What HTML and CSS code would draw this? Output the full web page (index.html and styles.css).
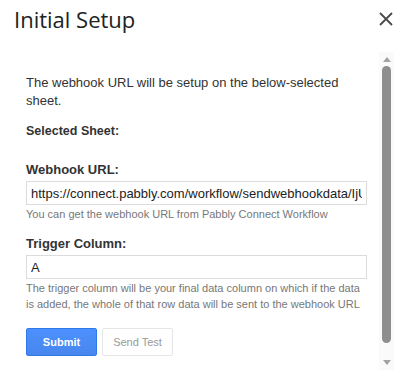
FILE: index.html
```html
<!DOCTYPE html>
<html lang="en">
<head>
    <meta charset="UTF-8">
    <meta name="viewport" content="width=device-width, initial-scale=1.0">
    <title>Initial Setup</title>
    <link rel="stylesheet" href="styles.css">
</head>
<body>

    <div class="dialog">

        <header class="dialog-head">
            <h1 class="dialog-title">Initial Setup</h1>
            <button class="close-btn" type="button" aria-label="Close">
                <svg width="14" height="14" viewBox="0 0 14 14">
                    <path d="M1 1 L13 13 M13 1 L1 13" stroke="#4a4a4a" stroke-width="1.8" fill="none"/>
                </svg>
            </button>
        </header>

        <div class="dialog-body">

            <form class="setup-form">

                <p class="intro">The webhook URL will be setup on the below-selected sheet.</p>

                <div class="field field-sheet">
                    <label>Selected Sheet:</label>
                </div>

                <div class="field field-url">
                    <label for="webhook-url">Webhook URL:</label>
                    <input type="text" id="webhook-url" value="https://connect.pabbly.com/workflow/sendwebhookdata/IjU3NjUwNTZmMDYzMDA0MzM1MjZjIg_3D_3D_pc">
                    <span class="hint">You can get the webhook URL from Pabbly Connect Workflow</span>
                </div>

                <div class="field field-trigger">
                    <label for="trigger-column">Trigger Column:</label>
                    <input type="text" id="trigger-column" value="A">
                    <span class="hint">The trigger column will be your final data column on which if the data is added, the whole of that row data will be sent to the webhook URL</span>
                </div>

                <div class="actions">
                    <button type="submit" class="btn btn-action">Submit</button>
                    <button type="button" class="btn">Send Test</button>
                </div>

            </form>

            <div class="scrollbar">
                <span class="arrow arrow-up"></span>
                <span class="thumb"></span>
                <span class="arrow arrow-down"></span>
            </div>

        </div>

    </div>

</body>
</html>
```

FILE: styles.css
```css
* {
    box-sizing: border-box;
}

body {
    margin: 0;
    background: #fff;
    font-family: "Liberation Sans", Arial, sans-serif;
    color: #333;
}

.dialog {
    width: 397px;
    height: 382px;
    display: flex;
    flex-direction: column;
}

.dialog-head {
    display: flex;
    align-items: flex-start;
    justify-content: space-between;
    padding: 5px 4px 0 14px;
    height: 52px;
}

.dialog-title {
    margin: 0;
    font-family: "Open Sans", sans-serif;
    font-weight: 400;
    font-size: 22px;
    line-height: 28px;
    color: #202124;
}

.close-btn {
    border: 0;
    background: none;
    padding: 0;
    margin: 7px 0 0 0;
    width: 14px;
    height: 14px;
    display: flex;
}

.dialog-body {
    flex: 1;
    display: flex;
    padding-right: 3px;
    padding-bottom: 12px;
}

.setup-form {
    flex: 1;
    padding: 22px 12px 0 26px;
}

.intro {
    margin: 0 0 13px;
    font-size: 13px;
    line-height: 18px;
}

.field {
    display: flex;
    flex-direction: column;
}

.field > label {
    font-size: 13px;
    font-weight: bold;
    line-height: 17px;
    margin-bottom: 3px;
}

.field-sheet {
    margin-bottom: 18px;
}

.field-sheet > label {
    font-size: 12.5px;
}

.field-url {
    margin-bottom: 13px;
}

.field-trigger {
    margin-bottom: 16px;
}

.field > input {
    height: 24px;
    border: 1px solid #dcdcdc;
    padding: 0 4px;
    font-family: "Liberation Sans", Arial, sans-serif;
    font-size: 13px;
    color: #222;
    outline: 0;
}

.hint {
    font-size: 11px;
    line-height: 16px;
    color: #777;
    margin-top: 1px;
}

.actions {
    display: flex;
    gap: 5px;
}

.btn {
    height: 28px;
    min-width: 71px;
    padding: 0 8px;
    border: 1px solid #e5e5e5;
    border-radius: 2px;
    background: #fff;
    color: #999;
    font-family: "Liberation Sans", Arial, sans-serif;
    font-size: 11px;
}

.btn-action {
    background: linear-gradient(#4d90fe, #4787ed);
    border-color: #3079ed;
    color: #fff;
    font-weight: bold;
}

.scrollbar {
    width: 15px;
    display: flex;
    flex-direction: column;
    align-items: center;
    background: #fafafa;
    padding: 5px 0;
}

.arrow {
    width: 0;
    height: 0;
    border-left: 4px solid transparent;
    border-right: 4px solid transparent;
}

.arrow-up {
    border-bottom: 5px solid #a3a3a3;
}

.arrow-down {
    border-top: 5px solid #a3a3a3;
    margin-top: auto;
}

.thumb {
    width: 9px;
    height: 277px;
    margin-top: 4px;
    border-radius: 5px;
    background: #8e8e8e;
}
```
